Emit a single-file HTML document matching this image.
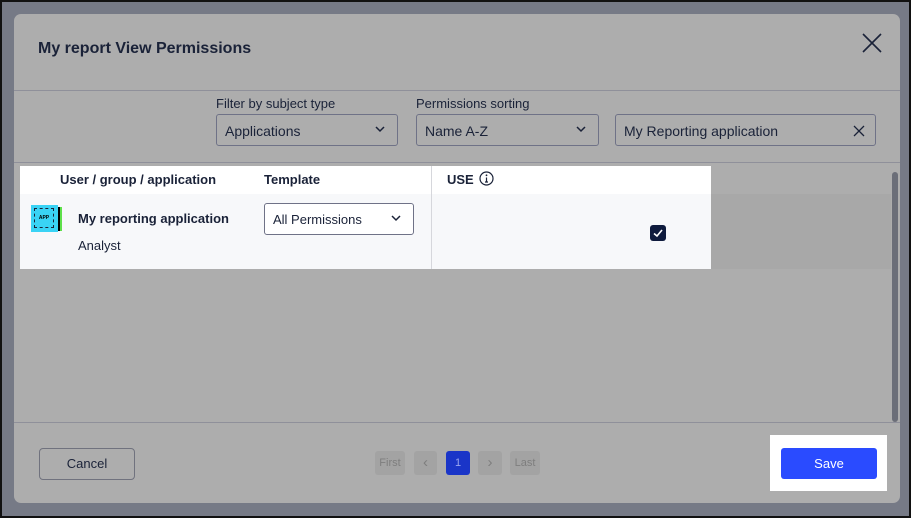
<!DOCTYPE html>
<html><head><style>
*{box-sizing:border-box;margin:0;padding:0}
body{width:911px;height:518px;background:#767a86;font-family:"Liberation Sans",sans-serif;position:relative;overflow:hidden;border:2px solid #111;}
.modal{position:absolute;left:12px;top:12px;width:886px;height:489px;background:#adadad;border-radius:7px;overflow:hidden}
.abs{position:absolute}
.t{color:#1a2238}
.sel{position:absolute;height:32px;border:1px solid #6f7287;border-radius:3px;font-size:14px;color:#1a2238;padding:8px 8px;background:#adadad}
.chev{position:absolute;right:12px;top:10px}
.lbl{position:absolute;font-size:13px;color:#1a2238}
.pg{position:absolute;top:437px;height:24px;border-radius:3px;background:#a3a3a3;color:#7e7e7e;font-size:11px;text-align:center;line-height:24px}
</style></head><body>
<div class="modal">
 <div class="abs t" style="left:24px;top:26px;font-size:16px;font-weight:bold">My report View Permissions</div>
 <svg class="abs" style="left:847px;top:18px" width="22" height="22"><path d="M2 2L20 20M20 2L2 20" stroke="#1a2238" stroke-width="1.6"/></svg>
 <div class="abs" style="left:0;top:76px;width:886px;height:1px;background:#8f909a"></div>
 <div class="lbl" style="left:202px;top:82px">Filter by subject type</div>
 <div class="lbl" style="left:402px;top:82px">Permissions sorting</div>
 <div class="sel" style="left:202px;top:100px;width:182px">Applications<svg class="chev" width="10" height="8"><path d="M1 2L5 6L9 2" stroke="#1a2238" stroke-width="1.5" fill="none"/></svg></div>
 <div class="sel" style="left:402px;top:100px;width:183px">Name A-Z<svg class="chev" width="10" height="8"><path d="M1 2L5 6L9 2" stroke="#1a2238" stroke-width="1.5" fill="none"/></svg></div>
 <div class="sel" style="left:601px;top:100px;width:261px">My Reporting application<svg class="abs" style="right:10px;top:10px" width="12" height="12"><path d="M1 1L11 11M11 1L1 11" stroke="#1a2238" stroke-width="1.3"/></svg></div>
 <div class="abs" style="left:0;top:148px;width:886px;height:1px;background:#8f909a"></div>
 <div class="abs" style="left:6px;top:152px;width:691px;height:28px;background:#fff"></div>
 <div class="abs" style="left:6px;top:180px;width:691px;height:75px;background:#f7f8fa"></div>
 <div class="abs" style="left:697px;top:180px;width:180px;height:75px;background:#a8a8a8"></div>
 <div class="abs" style="left:417px;top:152px;width:1px;height:103px;background:#d6d7dc"></div>
 <div class="abs t" style="left:46px;top:158px;font-size:13px;font-weight:bold">User / group / application</div>
 <div class="abs t" style="left:250px;top:158px;font-size:13px;font-weight:bold">Template</div>
 <div class="abs t" style="left:433px;top:158px;font-size:13px;font-weight:bold">USE</div>
 <svg class="abs" style="left:465px;top:157px" width="15" height="15"><circle cx="7.5" cy="7.5" r="6.5" fill="none" stroke="#1a2238" stroke-width="1.2"/><path d="M7.5 6.5V11M6 11H9" stroke="#1a2238" stroke-width="1.2"/><circle cx="7.5" cy="4.3" r="0.9" fill="#1a2238"/></svg>
 <div class="abs" style="left:17px;top:191px;width:27px;height:27px;background:#3ad3f5"></div>
 <div class="abs" style="left:20px;top:194px;width:20px;height:20px;border:1px dashed #1a2238;font-size:5px;font-weight:bold;text-align:center;line-height:18px">APP</div>
 <div class="abs" style="left:44px;top:193px;width:2px;height:24px;background:#000"></div>
 <div class="abs" style="left:46px;top:193px;width:2px;height:24px;background:#5ee04a"></div>
 <div class="abs t" style="left:64px;top:197px;font-size:13px;font-weight:bold">My reporting application</div>
 <div class="abs t" style="left:64px;top:224px;font-size:13px">Analyst</div>
 <div class="sel" style="left:250px;top:189px;width:150px;background:#fff;font-size:13px">All Permissions<svg class="chev" width="10" height="8"><path d="M1 2L5 6L9 2" stroke="#1a2238" stroke-width="1.5" fill="none"/></svg></div>
 <div class="abs" style="left:636px;top:211px;width:16px;height:16px;background:#0f1b3d;border-radius:3px"></div>
 <svg class="abs" style="left:636px;top:211px" width="16" height="16"><path d="M4 8.5L7 11L12 5" stroke="#fff" stroke-width="1.6" fill="none"/></svg>
 <div class="abs" style="left:878px;top:158px;width:6px;height:250px;background:#6b6e78;border-radius:3px"></div>
 <div class="abs" style="left:0;top:408px;width:886px;height:1px;background:#8f909a"></div>
 <div class="abs t" style="left:25px;top:434px;width:96px;height:32px;border:1px solid #70727e;border-radius:4px;font-size:13px;text-align:center;line-height:30px">Cancel</div>
 <div class="pg" style="left:361px;width:30px">First</div>
 <div class="pg" style="left:400px;width:23px;font-size:15px">‹</div>
 <div class="pg" style="left:432px;width:24px;background:#1a35c8;color:#9aa6f0">1</div>
 <div class="pg" style="left:464px;width:24px;font-size:15px">›</div>
 <div class="pg" style="left:496px;width:30px">Last</div>
 <div class="abs" style="left:756px;top:421px;width:117px;height:56px;background:#fff"></div>
 <div class="abs" style="left:767px;top:434px;width:96px;height:31px;background:#2a4bff;border-radius:3px;color:#fff;font-size:13px;text-align:center;line-height:31px">Save</div>
</div>
</body></html>
